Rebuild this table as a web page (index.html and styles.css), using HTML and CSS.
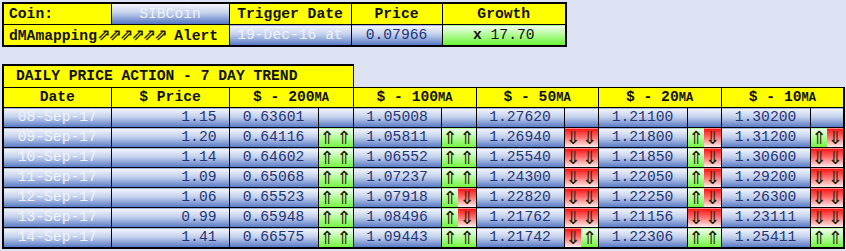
FILE: index.html
```html
<!DOCTYPE html>
<html>
<head>
<meta charset="utf-8">
<link rel="stylesheet" href="styles.css">
</head>
<body>
<div class="page">
  <table class="grid top">
    <colgroup>
      <col class="w108"><col class="w118"><col class="w122"><col class="w91"><col class="w124">
    </colgroup>
    <tr>
      <td class="y left bold">Coin:</td>
      <td class="b light">SIBCoin</td>
      <td class="y bold">Trigger Date</td>
      <td class="y bold">Price</td>
      <td class="y bold">Growth</td>
    </tr>
    <tr>
      <td class="y left bold" colspan="2">dMAmapping<span class="ne">⇗⇗⇗⇗⇗⇗</span> Alert</td>
      <td class="b light">19-Dec-16 at</td>
      <td class="b navy">0.07966</td>
      <td class="g"><b>x</b> 17.70</td>
    </tr>
  </table>

  <table class="grid trend">
    <colgroup>
      <col class="w108"><col class="w118">
      <col class="w89"><col class="w17"><col class="w18">
      <col class="w88"><col class="w17"><col class="w18">
      <col class="w88"><col class="w17"><col class="w17">
      <col class="w89"><col class="w17"><col class="w17">
      <col class="w89"><col class="w17"><col class="w17">
    </colgroup>
    <tr class="titlerow">
      <td class="y title" colspan="5">DAILY PRICE ACTION - 7 DAY TREND</td>
      <td class="void" colspan="12"></td>
    </tr>
    <tr class="head">
      <td class="y bold">Date</td>
      <td class="y bold">$ Price</td>
      <td class="y bold" colspan="3">$ - 200<span class="sc">MA</span></td>
      <td class="y bold" colspan="3">$ - 100<span class="sc">MA</span></td>
      <td class="y bold" colspan="3">$ - 50<span class="sc">MA</span></td>
      <td class="y bold" colspan="3">$ - 20<span class="sc">MA</span></td>
      <td class="y bold" colspan="3">$ - 10<span class="sc">MA</span></td>
    </tr>
    <tr>
      <td class="b light">08-Sep-17</td><td class="b navy right">1.15</td>
      <td class="b navy">0.63601</td><td class="b a1"></td><td class="b a2"></td>
      <td class="b navy">1.05008</td><td class="b a1"></td><td class="b a2"></td>
      <td class="b navy">1.27620</td><td class="b a1"></td><td class="b a2"></td>
      <td class="b navy">1.21100</td><td class="b a1"></td><td class="b a2"></td>
      <td class="b navy">1.30200</td><td class="b a1"></td><td class="b a2"></td>
    </tr>
    <tr>
      <td class="b light">09-Sep-17</td><td class="b navy right">1.20</td>
      <td class="b navy">0.64116</td><td class="up a1">⇑</td><td class="up a2">⇑</td>
      <td class="b navy">1.05811</td><td class="up a1">⇑</td><td class="up a2">⇑</td>
      <td class="b navy">1.26940</td><td class="dn a1">⇓</td><td class="dn a2">⇓</td>
      <td class="b navy">1.21800</td><td class="up a1">⇑</td><td class="dn a2">⇓</td>
      <td class="b navy">1.31200</td><td class="up a1">⇑</td><td class="dn a2">⇓</td>
    </tr>
    <tr>
      <td class="b light">10-Sep-17</td><td class="b navy right">1.14</td>
      <td class="b navy">0.64602</td><td class="up a1">⇑</td><td class="up a2">⇑</td>
      <td class="b navy">1.06552</td><td class="up a1">⇑</td><td class="up a2">⇑</td>
      <td class="b navy">1.25540</td><td class="dn a1">⇓</td><td class="dn a2">⇓</td>
      <td class="b navy">1.21850</td><td class="up a1">⇑</td><td class="dn a2">⇓</td>
      <td class="b navy">1.30600</td><td class="dn a1">⇓</td><td class="dn a2">⇓</td>
    </tr>
    <tr>
      <td class="b light">11-Sep-17</td><td class="b navy right">1.09</td>
      <td class="b navy">0.65068</td><td class="up a1">⇑</td><td class="up a2">⇑</td>
      <td class="b navy">1.07237</td><td class="up a1">⇑</td><td class="up a2">⇑</td>
      <td class="b navy">1.24300</td><td class="dn a1">⇓</td><td class="dn a2">⇓</td>
      <td class="b navy">1.22050</td><td class="up a1">⇑</td><td class="dn a2">⇓</td>
      <td class="b navy">1.29200</td><td class="dn a1">⇓</td><td class="dn a2">⇓</td>
    </tr>
    <tr>
      <td class="b light">12-Sep-17</td><td class="b navy right">1.06</td>
      <td class="b navy">0.65523</td><td class="up a1">⇑</td><td class="up a2">⇑</td>
      <td class="b navy">1.07918</td><td class="up a1">⇑</td><td class="dn a2">⇓</td>
      <td class="b navy">1.22820</td><td class="dn a1">⇓</td><td class="dn a2">⇓</td>
      <td class="b navy">1.22250</td><td class="up a1">⇑</td><td class="dn a2">⇓</td>
      <td class="b navy">1.26300</td><td class="dn a1">⇓</td><td class="dn a2">⇓</td>
    </tr>
    <tr>
      <td class="b light">13-Sep-17</td><td class="b navy right">0.99</td>
      <td class="b navy">0.65948</td><td class="up a1">⇑</td><td class="up a2">⇑</td>
      <td class="b navy">1.08496</td><td class="up a1">⇑</td><td class="dn a2">⇓</td>
      <td class="b navy">1.21762</td><td class="dn a1">⇓</td><td class="dn a2">⇓</td>
      <td class="b navy">1.21156</td><td class="dn a1">⇓</td><td class="dn a2">⇓</td>
      <td class="b navy">1.23111</td><td class="dn a1">⇓</td><td class="dn a2">⇓</td>
    </tr>
    <tr>
      <td class="b light">14-Sep-17</td><td class="b navy right">1.41</td>
      <td class="b navy">0.66575</td><td class="up a1">⇑</td><td class="up a2">⇑</td>
      <td class="b navy">1.09443</td><td class="up a1">⇑</td><td class="up a2">⇑</td>
      <td class="b navy">1.21742</td><td class="dn a1">⇓</td><td class="up a2">⇑</td>
      <td class="b navy">1.22306</td><td class="up a1">⇑</td><td class="up a2">⇑</td>
      <td class="b navy">1.25411</td><td class="up a1">⇑</td><td class="up a2">⇑</td>
    </tr>
  </table>
</div>
</body>
</html>
```

FILE: styles.css
```css
html, body {
  margin: 0;
  padding: 0;
  background: #dde3f3;
}

.page {
  padding: 2px 0 0 2px;
  display: flex;
  flex-direction: column;
  align-items: flex-start;
  gap: 17px;
  font-family: "Liberation Mono", "Courier New", "DejaVu Sans Mono", monospace;
  font-size: 14.67px;
}

.grid {
  border-collapse: collapse;
  table-layout: fixed;
  border: 2px solid #000;
}

.grid td {
  border: 1px solid #000;
  padding: 0;
  height: 19px;
  line-height: 17px;
  text-align: center;
  white-space: nowrap;
  overflow: hidden;
}

.top td {
  height: 20px;
}

.top { width: 565px; }
.trend { width: 843px; }

.w108 { width: 108px; }
.w118 { width: 118px; }
.w122 { width: 122px; }
.w91 { width: 91px; }
.w124 { width: 124px; }
.w89 { width: 89px; }
.w88 { width: 88px; }
.w17 { width: 17px; }
.w18 { width: 18px; }

.y {
  background: #ffff00;
  color: #111;
}

.bold { font-weight: bold; }

.left {
  text-align: left !important;
  padding-left: 5px !important;
}

.right {
  text-align: right !important;
  padding-right: 12px !important;
}

.b {
  background: linear-gradient(to bottom, #f4f6fc 0%, #c3d0ec 45%, #5476c4 100%);
}

.light { color: #eef2fc; }
.navy { color: #1e3476; }

.g {
  background: linear-gradient(to bottom, #f4fff0 0%, #66f530 100%);
  color: #111;
}

.ne {
  font-family: "DejaVu Sans", sans-serif;
  font-weight: bold;
  font-size: 16px;
  letter-spacing: -2px;
  color: #1c2408;
}

.title {
  height: 21px !important;
  text-align: left !important;
  padding-left: 12px !important;
  font-weight: bold;
}

.trend .titlerow td.void {
  background: transparent;
  border-top: none;
  border-right: none;
}

.trend { border-top: none; border-right: none; }
.trend .titlerow td.title { border-top: 2px solid #000; }
.trend tr:not(.titlerow) td:last-child { border-right: 2px solid #000; }

.sc { font-size: 12px; }

.a1 { border-right: none !important; }
.a2 { border-left: none !important; }

.up, .dn {
  font-family: "DejaVu Sans", sans-serif;
  font-size: 18px;
  line-height: 17px !important;
  color: #1c2408;
}

.up {
  background: linear-gradient(to bottom, #f2fff0 0%, #70f53c 100%);
}

.dn {
  background: linear-gradient(to bottom, #ff1010 0%, #ff6a6a 45%, #fff4f4 100%);
}
```
